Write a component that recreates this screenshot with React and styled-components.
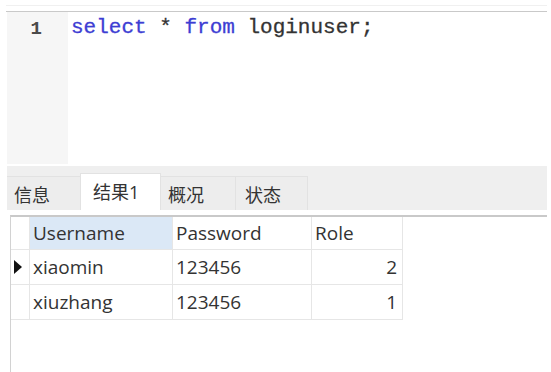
import React from "react";
import styled, { createGlobalStyle } from "styled-components";

const GlobalStyle = createGlobalStyle`
  body {
    margin: 0;
    background: #fff;
    font-family: "Open Sans", "Noto Sans CJK SC", sans-serif;
    color: #333;
  }
`;

const Page = styled.div`
  display: flex;
  flex-direction: column;
  height: 372px;
  padding: 0 4px 0 6px;
  box-sizing: border-box;
  overflow: hidden;
`;

const TopStrip = styled.div`
  height: 5px;
  border-bottom: 1px solid #f0f0f0;
  margin-bottom: 5px;
`;

const Editor = styled.div`
  display: flex;
  height: 152px;
  border-top: 1px solid #c9c9c9;
`;

const Gutter = styled.div`
  width: 61px;
  margin-left: 1px;
  background: #f6f6f6;
  box-sizing: border-box;
  padding: 6px 26px 0 0;
  text-align: right;
  font-family: "Liberation Mono", monospace;
  font-size: 19px;
  font-weight: bold;
  color: #4a4a4a;
`;

const Code = styled.div`
  padding: 4px 0 0 3px;
  font-family: "Liberation Mono", monospace;
  font-size: 21px;
  color: #333;
  white-space: pre;
  -webkit-text-stroke: 0.3px currentColor;
`;

const Keyword = styled.span`
  color: #3d3dd3;
`;

const TabBar = styled.div`
  display: flex;
  align-items: flex-end;
  height: 44px;
  margin-top: 2px;
  margin-left: 1px;
  background: #efefef;
`;

const Tab = styled.div`
  display: flex;
  align-items: center;
  box-sizing: border-box;
  width: ${(p) => p.$w}px;
  height: ${(p) => (p.$active ? 37 : 34)}px;
  background: ${(p) => (p.$active ? "#fff" : "#ededed")};
  border: 1px solid #e2e2e2;
  border-bottom: none;
  margin-left: -1px;
  padding: 0 0 ${(p) => (p.$active ? 3 : 0)}px ${(p) => p.$pad}px;
  font-size: 18px;
  color: #333;
  &:first-child {
    margin-left: 0;
    border-left: none;
  }
`;

const GridArea = styled.div`
  flex: 1;
  margin: 5px 0 0 4px;
  border-top: 2px solid #c9c9c9;
  border-left: 1px solid #d2d2d2;
`;

const Table = styled.div`
  display: grid;
  grid-template-columns: 19px 143px 139px 91px;
  width: max-content;
`;

const Cell = styled.div`
  display: flex;
  align-items: center;
  justify-content: ${(p) => (p.$right ? "flex-end" : "flex-start")};
  box-sizing: border-box;
  height: ${(p) => (p.$head ? 33 : 35)}px;
  padding: 0 5px 0 3px;
  border-right: 1px solid #e6e6e6;
  border-bottom: 1px solid #e6e6e6;
  background: ${(p) => (p.$sel ? "#dbe8f6" : "#fff")};
  font-size: 19px;
  color: #333;
`;

const Indicator = styled(Cell)`
  padding: 0 0 0 3px;
`;

const Arrow = styled.span`
  width: 0;
  height: 0;
  border-top: 7px solid transparent;
  border-bottom: 7px solid transparent;
  border-left: 8px solid #111;
`;

const tabs = [
  { label: "信息", w: 74, pad: 7 },
  { label: "结果1", w: 81, pad: 12 },
  { label: "概况", w: 76, pad: 7 },
  { label: "状态", w: 73, pad: 9 },
];

const rows = [
  { user: "xiaomin", pass: "123456", role: 2, current: true },
  { user: "xiuzhang", pass: "123456", role: 1 },
];

export default function App() {
  return (
    <Page>
      <GlobalStyle />
      <TopStrip />
      <Editor>
        <Gutter>1</Gutter>
        <Code>
          <Keyword>select</Keyword> * <Keyword>from</Keyword> loginuser;
        </Code>
      </Editor>
      <TabBar>
        {tabs.map((t, i) => (
          <Tab key={t.label} $w={t.w} $pad={t.pad} $active={i === 1}>
            {t.label}
          </Tab>
        ))}
      </TabBar>
      <GridArea>
        <Table>
          <Indicator $head />
          <Cell $head $sel>Username</Cell>
          <Cell $head>Password</Cell>
          <Cell $head>Role</Cell>
          {rows.map((r) => (
            <React.Fragment key={r.user}>
              <Indicator>{r.current && <Arrow />}</Indicator>
              <Cell>{r.user}</Cell>
              <Cell>{r.pass}</Cell>
              <Cell $right>{r.role}</Cell>
            </React.Fragment>
          ))}
        </Table>
      </GridArea>
    </Page>
  );
}
